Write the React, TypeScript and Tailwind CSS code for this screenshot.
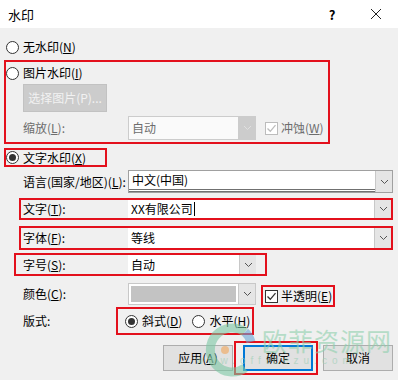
import React from 'react';

const RED = 'border-[#e3101c]';

function Radio({ checked = false }: { checked?: boolean }) {
    return (
        <span className="w-[13px] h-[13px] rounded-full border border-[#333333] bg-white flex items-center justify-center flex-shrink-0">
            {checked && <span className="w-[7px] h-[7px] rounded-full bg-[#333333]" />}
        </span>
    );
}

function Checkbox({ disabled = false }: { disabled?: boolean }) {
    return (
        <span className={`w-[13px] h-[13px] border bg-white flex items-center justify-center flex-shrink-0 ${disabled ? 'border-[#bcbcbc]' : 'border-[#333333]'}`}>
            <svg width="11" height="11" viewBox="0 0 11 11">
                <path d="M1.5 5.5 L4.3 8.3 L9.5 2.2" fill="none" stroke={disabled ? '#bcbcbc' : '#333333'} strokeWidth="1.3" />
            </svg>
        </span>
    );
}

function Arrow({ disabled = false }: { disabled?: boolean }) {
    return (
        <span className={`w-[17px] h-full flex items-center justify-center flex-shrink-0 border-l ${disabled ? 'bg-[#cccccc] border-[#cccccc]' : 'bg-[#e5e5e5] border-[#c8c8c8]'}`}>
            <svg width="9" height="6" viewBox="0 0 9 6">
                <path d="M1 1 L4.5 4.5 L8 1" fill="none" stroke={disabled ? '#e0e0e0' : '#555555'} strokeWidth="1" />
            </svg>
        </span>
    );
}

export default function App() {
    return (
        <div
            className="w-[398px] h-[380px] bg-[#f0f0f0] relative overflow-hidden text-[12px] text-black leading-none whitespace-nowrap"
            style={{ fontFamily: '"Noto Sans CJK SC", "Noto Sans", sans-serif' }}
        >
            {/* Title bar */}
            <div className="h-[28px] bg-white flex items-center justify-between pl-[8px]">
                <span className="text-[13px]">水印</span>
                <div className="flex items-center">
                    <span className="w-[44px] text-center text-[13px] font-bold">?</span>
                    <span className="w-[44px] flex justify-center">
                        <svg width="12" height="12" viewBox="0 0 12 12">
                            <path d="M1 1 L11 11 M11 1 L1 11" stroke="#222" strokeWidth="1" />
                        </svg>
                    </span>
                </div>
            </div>

            {/* 无水印 */}
            <div className="mt-[10px] h-[18px] pl-[6px] flex items-center gap-[4px]">
                <Radio />
                <span>无水印(<u>N</u>)</span>
            </div>

            {/* 图片水印 */}
            <div className={`mt-[4px] ml-[4px] w-[326px] h-[84px] border-2 ${RED} flex flex-col`}>
                <div className="mt-[2px] h-[18px] flex items-center gap-[4px]">
                    <Radio />
                    <span>图片水印(<u>I</u>)</span>
                </div>
                <div className="mt-[2px] ml-[17px] w-[84px] h-[28px] bg-[#cccccc] border border-[#c2c2c2] flex items-center justify-center text-[#f2f2f2]">
                    选择图片(P)...
                </div>
                <div className="mt-[4px] h-[24px] flex items-center">
                    <span className="pl-[17px] w-[122px] flex-shrink-0 text-[#6d6d6d]">缩放(<u>L</u>):</span>
                    <div className="w-[128px] h-full flex-shrink-0 bg-[#fafafa] border border-[#cccccc] flex items-center">
                        <span className="flex-1 pl-[3px] text-[#6d6d6d]">自动</span>
                        <Arrow disabled />
                    </div>
                    <div className="ml-[9px] flex items-center gap-[3px] text-[#6d6d6d]">
                        <Checkbox disabled />
                        <span>冲蚀(<u>W</u>)</span>
                    </div>
                </div>
            </div>

            {/* 文字水印 */}
            <div className={`mt-[4px] ml-[4px] w-[103px] h-[19px] border-2 ${RED} flex items-center gap-[4px]`}>
                <Radio checked />
                <span>文字水印(<u>X</u>)</span>
            </div>

            {/* 语言 */}
            <div className="mt-[3px] h-[23px] flex items-center">
                <span className="pl-[23px] w-[128px] flex-shrink-0">语言(国家/地区)(<u>L</u>):</span>
                <div className="w-[265px] h-full bg-white border border-[#a0a0a0] flex items-stretch">
                    <span className="flex-1 pl-[3px] flex items-center border-b-[3px] border-double border-[#707070]">中文(中国)</span>
                    <Arrow />
                </div>
            </div>

            {/* 文字 */}
            <div className={`mt-[5px] ml-[19px] w-[374px] h-[22px] border-2 ${RED} flex items-center`}>
                <span className="pl-[2px] w-[107px] flex-shrink-0">文字(<u>T</u>):</span>
                <div className="flex-1 h-full bg-white flex items-stretch">
                    <span className="flex-1 pl-[3px] flex items-center">
                        XX有限公司<span className="ml-[1px] w-[1px] h-[14px] bg-black" />
                    </span>
                    <Arrow />
                </div>
            </div>

            {/* 字体 */}
            <div className={`mt-[6px] ml-[19px] w-[374px] h-[24px] border-2 ${RED} flex items-center`}>
                <span className="pl-[2px] w-[107px] flex-shrink-0">字体(<u>F</u>):</span>
                <div className="flex-1 h-full bg-white flex items-stretch">
                    <span className="flex-1 pl-[3px] flex items-center">等线</span>
                    <Arrow />
                </div>
            </div>

            {/* 字号 */}
            <div className={`mt-[3px] ml-[14px] w-[253px] h-[23px] border-2 ${RED} flex items-center`}>
                <span className="pl-[7px] w-[112px] flex-shrink-0">字号(<u>S</u>):</span>
                <div className="w-[128px] h-full bg-white flex items-stretch">
                    <span className="flex-1 pl-[3px] flex items-center">自动</span>
                    <Arrow />
                </div>
            </div>

            {/* 颜色 */}
            <div className="mt-[7px] h-[22px] flex items-start">
                <span className="pl-[23px] w-[128px] h-full flex-shrink-0 flex items-center">颜色(<u>C</u>):</span>
                <div className="w-[128px] h-full flex-shrink-0 bg-white border border-[#c8c8c8] flex items-stretch">
                    <span className="flex-1 m-[2px] bg-[#c3c3c3]" />
                    <Arrow />
                </div>
                <div className={`ml-[5px] mt-[2px] w-[74px] h-[22px] flex-shrink-0 border-2 ${RED} flex items-center gap-[3px] pl-[2px]`}>
                    <Checkbox />
                    <span>半透明(<u>E</u>)</span>
                </div>
            </div>

            {/* 版式 */}
            <div className="mt-[2px] h-[28px] flex items-center">
                <span className="pl-[23px] w-[116px] flex-shrink-0">版式:</span>
                <div className={`w-[138px] h-full flex-shrink-0 border-2 ${RED} flex items-center pl-[7px]`}>
                    <Radio checked />
                    <span className="ml-[4px]">斜式(<u>D</u>)</span>
                    <span className="ml-[10px]"><Radio /></span>
                    <span className="ml-[4px]">水平(<u>H</u>)</span>
                </div>
            </div>

            {/* Buttons */}
            <div className="mt-[10px] flex justify-end gap-[10px] pr-[5px]">
                <div className="w-[70px] h-[26px] bg-[#e1e1e1] border border-[#adadad] flex items-center justify-center">
                    应用(<u>A</u>)
                </div>
                <div className="relative w-[70px] h-[26px] bg-[#e1e1e1] border-2 border-[#0078d7] flex items-center justify-center">
                    确定
                    <span className={`absolute -left-[11px] -right-[7px] -top-[6px] -bottom-[6px] border-2 ${RED}`} />
                </div>
                <div className="w-[70px] h-[26px] bg-[#e1e1e1] border border-[#adadad] flex items-center justify-center">
                    取消
                </div>
            </div>

            {/* Site watermark overlay */}
            <div className="absolute left-[205px] top-[322px] opacity-60 pointer-events-none">
                <svg width="52" height="56" viewBox="0 0 52 56">
                    <path d="M40 10 A22 22 0 1 0 40 46" fill="none" stroke="#7cc8a4" strokeWidth="9" />
                    <path d="M40 10 A22 22 0 0 1 46 20" fill="none" stroke="#6aa6d8" strokeWidth="9" />
                    <circle cx="20" cy="28" r="4" fill="#f2a65a" />
                </svg>
            </div>
            <div className="absolute left-[262px] top-[328px] text-[25px] tracking-[1px] text-[#8fd0ad] opacity-60 pointer-events-none">
                欧菲资源网
            </div>
            <div className="absolute left-[196px] top-[356px] text-[10px] tracking-[5px] text-[#9ccfb5] opacity-60 pointer-events-none" style={{ fontFamily: '"Liberation Sans", sans-serif' }}>
                www.officezu.com
            </div>
        </div>
    );
}
